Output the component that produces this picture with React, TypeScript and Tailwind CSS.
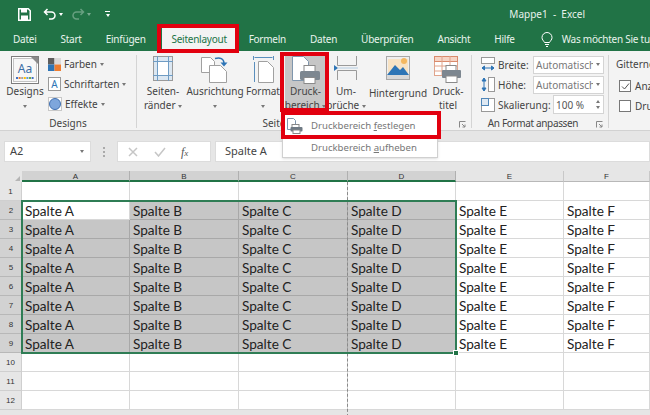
import React from "react";

const ff = "font-['Noto_Sans','Open_Sans',sans-serif]";

function Chev({ className = "" }: { className?: string }) {
  return <span className={`inline-block border-x-[2.5px] border-t-[3px] border-x-transparent border-t-[#777] align-middle ${className}`} />;
}

function DesignsIcon() {
  return (
    <svg width="28" height="28" viewBox="0 0 28 28">
      <rect x="0.5" y="0.5" width="27" height="27" fill="#fff" stroke="#7d7d7d" />
      <rect x="2.5" y="2.5" width="23" height="23" fill="#f7f7f7" stroke="#c4c4c4" />
      <path d="M20 1h7v7z" fill="#8a8a8a" />
      <text x="14" y="17" textAnchor="middle" fontSize="12" fill="#3b6ea5" fontFamily="Noto Sans">Aa</text>
      {["#4472c4", "#ed7d31", "#a5a5a5", "#ffc000", "#5b9bd5", "#70ad47", "#4472c4"].map((c, i) => (
        <rect key={i} x={5 + i * 2.6} y="21" width="2" height="2" fill={c} />
      ))}
    </svg>
  );
}

function Farben() {
  return (
    <svg width="13" height="13" viewBox="0 0 13 13">
      <rect width="6.5" height="6.5" fill="#5d5d5d" />
      <rect x="6.5" width="6.5" height="6.5" fill="#d9d9d9" />
      <rect y="6.5" width="6.5" height="6.5" fill="#2e75b6" />
      <rect x="6.5" y="6.5" width="6.5" height="6.5" fill="#ed7d31" />
    </svg>
  );
}

function SchriftIcon() {
  return (
    <svg width="13" height="14" viewBox="0 0 13 14">
      <rect x="0.5" y="0.5" width="12" height="13" fill="#fff" stroke="#9a9a9a" />
      <text x="6.5" y="11" textAnchor="middle" fontSize="10" fill="#2e75b6" fontFamily="Noto Sans">A</text>
    </svg>
  );
}

function EffekteIcon() {
  return (
    <svg width="14" height="14" viewBox="0 0 14 14">
      <rect x="0.5" y="0.5" width="13" height="13" fill="#fff" stroke="#c8c8c8" />
      <circle cx="7" cy="7" r="5.5" fill="#7ea6dc" stroke="#3f6fb0" />
    </svg>
  );
}

function RaenderIcon() {
  return (
    <svg width="20" height="25" viewBox="0 0 20 25">
      <rect x="0.5" y="0.5" width="19" height="24" fill="#fff" stroke="#9a9a9a" />
      <rect x="1" y="1" width="18" height="4" fill="#dbe7f2" />
      <rect x="1" y="20" width="18" height="4" fill="#dbe7f2" />
      <rect x="1" y="1" width="3" height="23" fill="#dbe7f2" />
      <rect x="16" y="1" width="3" height="23" fill="#dbe7f2" />
      <path d="M4.5 0v25M15.5 0v25M0 5.5h20M0 19.5h20" stroke="#6f9cc4" fill="none" />
    </svg>
  );
}

function AusrichtungIcon() {
  return (
    <svg width="28" height="28" viewBox="0 0 28 28">
      <path d="M0.5 1.5h9l4 4v11h-13z" fill="#fff" stroke="#a0a0a0" />
      <path d="M8.5 9.5h11l6 6v11h-17z" fill="#fff" stroke="#a0a0a0" />
      <path d="M14 2.5c5-1.5 9 0 9 5" fill="none" stroke="#2e75b6" strokeWidth="1.5" />
      <path d="M19.5 6.5h7l-3.5 4z" fill="#2e75b6" />
    </svg>
  );
}

function FormatIcon() {
  return (
    <svg width="21" height="28" viewBox="0 0 21 28">
      <path d="M1.5 1.5h18M0.5 0v4M20.5 0v4M1.5 6v20" stroke="#5b8fbd" fill="none" />
      <path d="M5.5 5.5h9l6 6v15h-15z" fill="#fff" stroke="#a0a0a0" />
    </svg>
  );
}

function DruckIcon() {
  return (
    <svg width="30" height="28" viewBox="0 0 30 28">
      <path d="M1.5 0.5h11l5 5v19h-16z" fill="#fff" stroke="#7f96ad" />
      <rect x="13" y="9.5" width="11" height="7" fill="#fff" stroke="#8a8a8a" />
      <rect x="9" y="15" width="20" height="9" rx="1.5" fill="#7d8790" />
      <rect x="13" y="21.5" width="11" height="6" fill="#fff" stroke="#8a8a8a" />
    </svg>
  );
}

function UmbruchIcon() {
  return (
    <svg width="24" height="24" viewBox="0 0 24 24">
      <path d="M3.5 0v9.5h19V0M3.5 24v-9.5h19V24" fill="none" stroke="#9a9a9a" />
      <path d="M0 9l4 3-4 3z" fill="#2e75b6" />
      <path d="M4 12h20" stroke="#b5cde2" />
    </svg>
  );
}

function HintergrundIcon() {
  return (
    <svg width="24" height="24" viewBox="0 0 24 24">
      <rect x="0.5" y="0.5" width="23" height="23" fill="#efefef" stroke="#a8a8a8" />
      <rect x="2" y="3" width="20" height="15" fill="#f8e3c4" />
      <circle cx="18" cy="5" r="3" fill="#f4b860" />
      <path d="M1 19l8-10 5 5 3-3 6 8z" fill="#2e75b6" />
      <path d="M1 19h22v4H1z" fill="#d8d8d8" />
    </svg>
  );
}

function DruckTitelIcon() {
  return (
    <svg width="28" height="28" viewBox="0 0 28 28">
      <rect x="0.5" y="0.5" width="23" height="19" fill="#fff" stroke="#e0a48c" />
      <rect x="0.5" y="0.5" width="23" height="5" fill="#f6d5c6" stroke="#d98a6c" />
      <path d="M8 0v20M16 0v20M0 10h24M0 15h24" stroke="#e0a48c" />
      <rect x="12" y="9.5" width="10" height="6" fill="#fff" stroke="#8a8a8a" />
      <rect x="8" y="14" width="19" height="8" rx="1" fill="#7d8790" />
      <rect x="12" y="20" width="11" height="6.5" fill="#fff" stroke="#8a8a8a" />
    </svg>
  );
}

function Big({
  icon,
  lines,
  w,
  className = "",
}: {
  icon: React.ReactNode;
  lines: React.ReactNode[];
  w: string;
  className?: string;
}) {
  return (
    <div className={`flex flex-col items-center shrink-0 h-[58px] ${w} ${className}`}>
      <div className="h-[32px] flex items-start justify-center pt-[2px]">{icon}</div>
      <div className="text-center leading-[14px] text-[10px] text-[#444] whitespace-nowrap">
        {lines.map((l, i) => (
          <div key={i} className="h-[14px]">{l}</div>
        ))}
      </div>
    </div>
  );
}

function Group({
  w,
  label,
  launcher,
  labelClass = "",
  children,
}: {
  w: string;
  label: string;
  launcher?: boolean;
  labelClass?: string;
  children: React.ReactNode;
}) {
  return (
    <div className={`relative shrink-0 h-[77px] mt-[3px] flex flex-col ${w}`}>
      <div className="flex-1 min-h-0 flex">{children}</div>
      <div className={`h-[15px] text-center text-[10px] leading-[14px] text-[#444] whitespace-nowrap ${labelClass}`}>{label}</div>
      {launcher && (
        <svg width="7" height="7" viewBox="0 0 7 7" className="absolute right-[5px] bottom-[3px]">
          <path d="M0.5 6.5V0.5h6M3 3l3 3M6 3.5V6H3.5" fill="none" stroke="#888" />
        </svg>
      )}
    </div>
  );
}

function Sep() {
  return <div className="w-px shrink-0 h-[73px] mt-[4px] bg-[#d4d4d4]" />;
}

function Drop({ w, text }: { w: string; text: string }) {
  return (
    <div className={`h-[18px] bg-white border border-[#d4d4d4] flex items-center pl-[2px] pr-[3px] gap-[3px] text-[10px] text-[#777] whitespace-nowrap overflow-hidden ${w}`}>
      <span className="flex-1 overflow-hidden">{text}</span>
      <Chev />
    </div>
  );
}

const tabs = ["Datei", "Start", "Einfügen", "Seitenlayout", "Formeln", "Daten", "Überprüfen", "Ansicht", "Hilfe"];
const cols = ["A", "B", "C", "D", "E", "F"];
const colW = ["w-[108px]", "w-[109px]", "w-[109px]", "w-[108px]", "w-[108px]", "w-[86px]"];
const rows = [1, 2, 3, 4, 5, 6, 7, 8, 9, 10, 11, 12];

function Cell({ r, c }: { r: number; c: number }) {
  const hasText = r >= 2 && r <= 9;
  const sel = hasText && c <= 3 && !(r === 2 && c === 0);
  return (
    <div
      className={`shrink-0 h-full border-r border-b pl-[3px] text-[13.6px] leading-[20px] text-[#222] whitespace-nowrap overflow-hidden font-['Lato',sans-serif] ${colW[c]} ${
        sel ? "bg-[#c6c6c6] border-[#a8a8a8]" : "bg-white border-[#d8d8d8]"
      }`}
    >
      {hasText ? `Spalte ${cols[c]}` : ""}
    </div>
  );
}

export default function App() {
  return (
    <div className={`relative w-[650px] h-[415px] overflow-hidden bg-[#e6e6e6] ${ff}`}>
      {/* Title bar */}
      <div className="h-[28px] bg-[#217346] flex items-center text-white text-[10px]">
        <svg width="13" height="13" viewBox="0 0 13 13" className="ml-[18px]">
          <path d="M0.75 0.75h9.5l2 2v9.5H0.75z" fill="none" stroke="#fff" strokeWidth="1.5" />
          <rect x="3" y="1" width="6" height="3.5" fill="#fff" />
          <rect x="3" y="7.5" width="7" height="4.5" fill="#fff" />
        </svg>
        <svg width="14" height="12" viewBox="0 0 14 12" className="ml-[12px]">
          <path d="M4.5 1L1.5 4l3 3M2 4h6.5a3.5 3.5 0 0 1 0 7H6" fill="none" stroke="#fff" strokeWidth="1.5" />
        </svg>
        <Chev className="ml-[2px] !border-t-white" />
        <svg width="14" height="12" viewBox="0 0 14 12" className="ml-[8px] opacity-40">
          <path d="M9.5 1l3 3-3 3M12 4H5.5a3.5 3.5 0 0 0 0 7H8" fill="none" stroke="#cfe3d7" strokeWidth="1.5" />
        </svg>
        <Chev className="ml-[2px] opacity-40 !border-t-white" />
        <div className="ml-[14px] flex flex-col items-center gap-[2px]">
          <div className="w-[5px] h-[1px] bg-white" />
          <Chev className="!border-t-white" />
        </div>
        <div className="flex-1 text-right pr-[65px] text-[#e8f2ec] whitespace-pre">Mappe1  -  Excel</div>
      </div>

      {/* Tabs */}
      <div className="h-[23px] bg-[#217346] flex items-stretch text-[#e9f3ed] text-[10px] tracking-[-0.25px] pl-[1px] overflow-hidden">
        {tabs.map((t) => (
          <div
            key={t}
            className={`flex items-center justify-center whitespace-nowrap shrink-0 ${
              t === "Seitenlayout" ? "bg-[#f3f3f3] text-[#217346] ml-[4px] w-[75px]" : "px-[12px]"
            }`}
          >
            {t}
          </div>
        ))}
        <svg width="12" height="15" viewBox="0 0 12 15" className="ml-[14px] mt-[4px] shrink-0">
          <path d="M3.5 10.5C2.5 8.5 1 7.8 1 5.5a5 5 0 0 1 10 0c0 2.3-1.5 3-2.5 5zM4 12.5h4M5 14.5h2" fill="none" stroke="#fff" />
        </svg>
        <div className="ml-[9px] flex items-center whitespace-nowrap shrink-0">Was möchten Sie tun?</div>
      </div>

      {/* Ribbon */}
      <div className="h-[80px] bg-[#f3f3f3] border-b border-[#d2d2d2] flex overflow-hidden">
        <Group w="w-[136px]" label="Designs">
          <Big w="w-[38px] ml-[6px]" icon={<DesignsIcon />} lines={["Designs", <Chev />]} />
          <div className="ml-[4px] flex flex-col gap-[6px] pt-[3px] text-[10px] leading-[14px] text-[#444]">
            <div className="flex items-center gap-[3px] whitespace-nowrap"><Farben />Farben <Chev /></div>
            <div className="flex items-center gap-[3px] whitespace-nowrap"><SchriftIcon />Schriftarten <Chev /></div>
            <div className="flex items-center gap-[3px] whitespace-nowrap"><EffekteIcon />Effekte <Chev /></div>
          </div>
        </Group>
        <Sep />
        <Group w="w-[334px]" label="Seite einrichten" labelClass="pr-[10px]" launcher>
          <Big w="w-[36px] ml-[8px]" icon={<RaenderIcon />} lines={["Seiten-", <>ränder <Chev /></>]} />
          <Big w="w-[58px] ml-[5px]" icon={<AusrichtungIcon />} lines={["Ausrichtung", <Chev />]} />
          <Big w="w-[34px] ml-[2px]" icon={<FormatIcon />} lines={["Format", <Chev />]} />
          <Big w="w-[41px] ml-[5px] bg-[#c6c6c6] h-[56px]" icon={<DruckIcon />} lines={["Druck-", <>bereich <Chev /></>]} />
          <Big w="w-[36px] ml-[2px]" icon={<UmbruchIcon />} lines={["Um-", <>brüche <Chev /></>]} />
          <Big w="w-[56px] ml-[6px]" icon={<HintergrundIcon />} lines={["Hintergrund"]} />
          <Big w="w-[36px] ml-[4px]" icon={<DruckTitelIcon />} lines={["Druck-", "titel"]} />
        </Group>
        <Sep />
        <Group w="w-[136px]" label="An Format anpassen" labelClass="pr-[14px] tracking-[-0.35px]" launcher>
          <div className="flex flex-col gap-[1px] pl-[9px] pt-[1px] text-[10px] leading-[14px] text-[#444]">
            <div className="flex items-center h-[19px] whitespace-nowrap">
              <svg width="14" height="15" viewBox="0 0 14 15">
                <rect x="0.5" y="0.5" width="13" height="6" fill="#fff" stroke="#999" />
                <path d="M1 11h12M1 11l2.5-2v4zM13 11l-2.5-2v4z" stroke="#2e75b6" fill="#2e75b6" />
              </svg>
              <span className="ml-[3px] w-[35px]">Breite:</span>
              <Drop w="w-[71px]" text="Automatisch" />
            </div>
            <div className="flex items-center h-[19px] whitespace-nowrap">
              <svg width="14" height="15" viewBox="0 0 14 15">
                <rect x="7.5" y="0.5" width="6" height="14" fill="#fff" stroke="#999" />
                <path d="M3 1v13M3 1L1 4h4zM3 14L1 11h4z" stroke="#2e75b6" fill="#2e75b6" />
              </svg>
              <span className="ml-[3px] w-[35px]">Höhe:</span>
              <Drop w="w-[71px]" text="Automatisch" />
            </div>
            <div className="flex items-center h-[19px] whitespace-nowrap">
              <svg width="14" height="14" viewBox="0 0 14 14">
                <rect x="0.5" y="0.5" width="13" height="13" fill="#fff" stroke="#999" />
                <rect x="0.5" y="0.5" width="7" height="7" fill="#dfe9f3" stroke="#4f86b8" />
              </svg>
              <span className="ml-[3px] w-[55px]">Skalierung:</span>
              <div className="w-[51px] h-[19px] bg-white border border-[#d4d4d4] flex items-center pl-[2px] text-[#555]">
                <span className="flex-1">100 %</span>
                <span className="flex flex-col gap-[3px] pr-[3px]">
                  <Chev className="rotate-180 block" />
                  <Chev className="block" />
                </span>
              </div>
            </div>
          </div>
        </Group>
        <Sep />
        <div className="pl-[7px] pt-[6px] text-[10px] leading-[14px] text-[#444] whitespace-nowrap">
          <div className="h-[19px]">Gitternetzlinien</div>
          <div className="flex items-center gap-[4px] h-[20px] pl-[3px]">
            <div className="w-[12px] h-[12px] border border-[#777] bg-white flex items-center justify-center">
              <svg width="9" height="9" viewBox="0 0 9 9"><path d="M1 4.5l2.5 2.5L8 1.5" fill="none" stroke="#555" /></svg>
            </div>
            Anzeigen
          </div>
          <div className="flex items-center gap-[4px] h-[19px] pl-[3px]">
            <div className="w-[12px] h-[12px] border border-[#777] bg-white" />
            Drucken
          </div>
        </div>
      </div>

      {/* Formula bar */}
      <div className="h-[21px] mt-[10px] flex text-[11px] text-[#444]">
        <div className="ml-[4px] w-[87px] bg-white border border-[#dcdcdc] flex items-center pl-[5px] pr-[6px]">
          <span className="flex-1">A2</span>
          <Chev />
        </div>
        <div className="w-[26px] flex flex-col items-center justify-center gap-[2px]">
          <div className="w-[2px] h-[2px] bg-[#aaa]" />
          <div className="w-[2px] h-[2px] bg-[#aaa]" />
          <div className="w-[2px] h-[2px] bg-[#aaa]" />
        </div>
        <div className="w-[94px] bg-white border border-[#dcdcdc] flex items-center">
          <svg width="10" height="10" viewBox="0 0 10 10" className="ml-[10px]"><path d="M1 1l8 8M9 1L1 9" stroke="#c6c6c6" strokeWidth="1.5" /></svg>
          <svg width="12" height="10" viewBox="0 0 12 10" className="ml-[16px]"><path d="M1 5l3.5 4L11 1" fill="none" stroke="#c6c6c6" strokeWidth="1.5" /></svg>
          <span className="ml-[15px] italic font-['Liberation_Serif',serif] text-[#555] text-[12px] whitespace-nowrap">f<span className="text-[9px]">x</span></span>
        </div>
        <div className="ml-[4px] flex-1 bg-white border border-[#dcdcdc] flex items-center pl-[9px] text-[11px]">Spalte A</div>
      </div>

      {/* Sheet */}
      <div className="relative mt-[9px]">
        <div className="flex h-[11px] text-[8px] leading-[11px] text-[#333] font-['Liberation_Sans',sans-serif]">
          <div className="w-[22px] shrink-0 bg-[#e6e6e6] relative">
            <div className="absolute right-[2px] bottom-[1px] border-l-[5px] border-b-[5px] border-l-transparent border-b-[#b5b5b5]" />
          </div>
          {cols.map((c, i) => (
            <div
              key={c}
              className={`shrink-0 text-center border-r ${colW[i]} ${
                i < 4 ? "bg-[#d2d2d2] border-[#b0b0b0] border-b-2 border-b-[#217346]" : "bg-[#e6e6e6] border-[#c8c8c8] border-b border-b-[#b8b8b8]"
              }`}
            >
              {c}
            </div>
          ))}
        </div>
        {rows.map((r) => (
          <div key={r} className="flex h-[19px]">
            <div
              className={`w-[22px] shrink-0 text-center text-[8px] leading-[19px] text-[#333] font-['Liberation_Sans',sans-serif] border-b ${
                r >= 2 && r <= 9 ? "bg-[#d2d2d2] border-[#b8b8b8]" : "bg-[#e6e6e6] border-[#cfcfcf] border-r"
              }`}
            >
              {r}
            </div>
            {cols.map((_, c) => (
              <Cell key={c} r={r} c={c} />
            ))}
          </div>
        ))}
        {/* page break */}
        <div className="absolute left-[347px] top-[11px] h-[240px] border-l border-dashed border-[#8a8a8a]" />
        {/* selection */}
        <div className="absolute left-[21px] top-[29px] w-[436px] h-[154px] border-2 border-[#2f7d55]" />
        <div className="absolute left-[453px] top-[179px] w-[6px] h-[6px] bg-[#217346] border border-white" />
      </div>

      {/* Menu */}
      <div className="absolute left-[282px] top-[112px] w-[156px] h-[46px] bg-white border border-[#d0d0d0] shadow-sm text-[9.6px] text-[#777]">
        <div className="h-[26px] flex items-center pl-[4px]">
          <svg width="16" height="16" viewBox="0 0 16 16">
            <path d="M0.5 0.5h6l2 2v9h-8z" fill="#fff" stroke="#7f96ad" />
            <rect x="5" y="6.5" width="7" height="4" fill="#fff" stroke="#888" />
            <rect x="3.5" y="9" width="12" height="4.5" rx="1" fill="#6f7a84" />
            <rect x="6" y="12" width="7" height="3.5" fill="#fff" stroke="#888" />
          </svg>
          <span className="ml-[8px]">Druckbereich <span className="underline">f</span>estlegen</span>
        </div>
        <div className="h-[18px] flex items-center pl-[28px]">
          <span>Druckbereich <span className="underline">a</span>ufheben</span>
        </div>
      </div>

      {/* Annotation frames */}
      <div className="absolute left-[157px] top-[24px] w-[82px] h-[29px] border-[4px] border-[#e2000f]" />
      <div className="absolute left-[280px] top-[52px] w-[49px] h-[60px] border-[4px] border-[#e2000f]" />
      <div className="absolute left-[281px] top-[111px] w-[160px] h-[28px] border-[4px] border-[#e2000f]" />
    </div>
  );
}
